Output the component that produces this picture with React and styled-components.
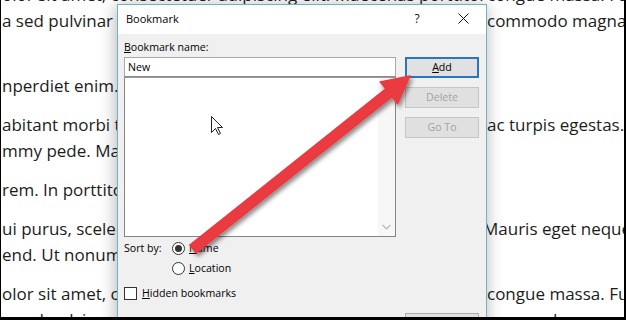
import React from 'react'
import styled, { createGlobalStyle } from 'styled-components'

const GlobalStyle = createGlobalStyle`
  html, body {
    margin: 0;
    padding: 0;
    background: #fff;
  }
  body {
    width: 626px;
    height: 320px;
    overflow: hidden;
  }
`

// what shows of the Word page around the dialog: [left of dialog, right of dialog, right text slips under the border]
const paragraphs = [
  [
    ['olor sit amet, consectetuer adipiscing elit. Maecenas porttitor', 'congue massa. Fusce'],
    ['a sed pulvinar ultricies, purus lectus malesuada libero, sit amet', 'commodo magna eros'],
    ['', '']
  ],
  [['nperdiet enim. Fusce est. Vivamus a tellus.', '']],
  [
    ['abitant morbi tristique senectus et netus et malesuada fames', 'ac turpis egestas. Proin'],
    ['mmy pede. Mauris et orci.', '']
  ],
  [['rem. In porttitor. Donec laoreet nonummy augue.', '']],
  [
    ['ui purus, scelerisque at, vulputate vitae, pretium mattis, nunc.', 'Mauris eget neque', true],
    ['end. Ut nonummy.', '']
  ],
  [
    ['olor sit amet, consectetuer adipiscing elit. Maecenas porttitor', 'congue massa. Fusce'],
    ['a sed pulvinar ultricies, purus lectus malesuada libero, sit amet', 'commodo magna eros']
  ]
]

function Radio({ checked, children }) {
  return (
    <RadioRow>
      <RadioCircle>{checked && <RadioDot />}</RadioCircle>
      <span>{children}</span>
    </RadioRow>
  )
}

function Overlay() {
  return (
    <OverlaySvg width="626" height="320" viewBox="0 0 626 320">
      <defs>
        <filter id="arrowShadow" x="-20%" y="-20%" width="140%" height="140%">
          <feDropShadow dx="2" dy="3" stdDeviation="2" floodColor="#000" floodOpacity="0.45" />
        </filter>
      </defs>
      {/* cursor */}
      <path
        d="M211.5 116.5 L211.5 132.5 L215.5 128.5 L218.5 134.5 L220.5 133.5 L217.5 127.5 L222.5 127.5 Z"
        fill="#fff"
        stroke="#222"
        strokeWidth="1"
        strokeLinejoin="round"
      />
      {/* red arrow */}
      <polygon
        points="189.9,245.1 385.8,88.9 380.2,81.9 410,76 397.6,103.8 392,96.7 196.1,252.9"
        fill="#ea3a40"
        stroke="#ea3a40"
        strokeWidth="1.5"
        strokeLinejoin="round"
        filter="url(#arrowShadow)"
      />
    </OverlaySvg>
  )
}

export default function App() {
  return (
    <>
      <GlobalStyle />
      <Frame>
        <Page>
          {paragraphs.map((lines, i) => (
            <Paragraph key={i}>
              {lines.map(([left, right, cut], j) => (
                <Line key={j}>
                  <LeftText>{left || '\u00a0'}</LeftText>
                  <RightText $cut={cut}>{right}</RightText>
                </Line>
              ))}
            </Paragraph>
          ))}
        </Page>

        <Dialog>
          <TitleBar>
            <Title>Bookmark</Title>
            <CaptionButton>?</CaptionButton>
            <CaptionButton>
              <svg width="11" height="11" viewBox="0 0 11 11">
                <path d="M0.5 0.5 L10.5 10.5 M10.5 0.5 L0.5 10.5" stroke="#111" strokeWidth="1" />
              </svg>
            </CaptionButton>
          </TitleBar>

          <Body>
            <FieldLabel>
              <u>B</u>ookmark name:
            </FieldLabel>
            <span />

            <Fields>
              <NameInput>New</NameInput>
              <ListBox>
                <ListItems />
                <ScrollTrack>
                  <svg width="9" height="6" viewBox="0 0 9 6">
                    <path d="M0.5 0.8 L4.5 4.8 L8.5 0.8" fill="none" stroke="#b4b4b4" strokeWidth="1.2" />
                  </svg>
                </ScrollTrack>
              </ListBox>
            </Fields>

            <ButtonStack>
              <DialogButton $default>
                <u>A</u>dd
              </DialogButton>
              <DialogButton disabled>Delete</DialogButton>
              <DialogButton disabled>Go To</DialogButton>
            </ButtonStack>

            <SortRow>
              <SortLabel>Sort by:</SortLabel>
              <RadioGroup>
                <Radio checked>
                  <u>N</u>ame
                </Radio>
                <Radio>
                  <u>L</u>ocation
                </Radio>
              </RadioGroup>
            </SortRow>
            <span />

            <CheckRow>
              <CheckBox />
              <span>
                <u>H</u>idden bookmarks
              </span>
            </CheckRow>
            <span />

            <span />
            <FooterButton>Cancel</FooterButton>
          </Body>
        </Dialog>

        <Overlay />
      </Frame>
    </>
  )
}

const Frame = styled.div`
  position: relative;
  width: 626px;
  height: 320px;
  box-sizing: border-box;
  border-left: 1px solid #000;
  border-right: 2px solid #000;
  border-bottom: 3px solid #000;
  overflow: hidden;
  background: #fff;
`

const Page = styled.div`
  margin-top: -18px;
  font-family: 'Open Sans', sans-serif;
  font-size: 17px;
  line-height: 26px;
  color: #1c1c1c;
`

const Paragraph = styled.div`
  margin-bottom: 13px;
`

const Line = styled.div`
  display: grid;
  grid-template-columns: 486px 1fr;
  height: 26px;
  white-space: nowrap;
`

const LeftText = styled.span`
  overflow: hidden;
  padding-left: 1px;
`

const RightText = styled.span`
  margin-left: ${props => (props.$cut ? '-4px' : '0px')};
`

const Dialog = styled.div`
  position: absolute;
  left: 116px;
  top: 4px;
  width: 370px;
  height: 330px;
  box-sizing: border-box;
  border: 1px solid #6db3c7;
  background: #f0f0f0;
  box-shadow: -1px 2px 16px rgba(0, 0, 0, 0.3);
  font-family: 'Open Sans', sans-serif;
  font-size: 10.6px;
  color: #000;
  display: flex;
  flex-direction: column;
`

const TitleBar = styled.div`
  height: 29px;
  flex-shrink: 0;
  background: #fff;
  display: flex;
`

const Title = styled.div`
  flex: 1;
  padding-left: 8px;
  font-size: 11px;
  line-height: 27px;
`

const CaptionButton = styled.div`
  width: 46px;
  height: 29px;
  box-sizing: border-box;
  padding-bottom: 2px;
  display: flex;
  align-items: center;
  justify-content: center;
  font-size: 12px;
  color: #111;
`

const Body = styled.div`
  display: grid;
  grid-template-columns: 272px 74px;
  column-gap: 9px;
  align-items: start;
  padding: 6px 0 0 6px;
`

const FieldLabel = styled.div`
  line-height: 15px;
  margin-bottom: 2px;
`

const Fields = styled.div`
  display: flex;
  flex-direction: column;
`

const NameInput = styled.div`
  height: 20px;
  box-sizing: border-box;
  border: 1px solid #a9a9a9;
  border-bottom-color: #8a8a8a;
  background: #fff;
  padding-left: 3px;
  line-height: 18px;
`

const ListBox = styled.div`
  height: 160px;
  box-sizing: border-box;
  border: 1px solid #858585;
  border-top-color: #9a9a9a;
  background: #fff;
  display: flex;
`

const ListItems = styled.div`
  flex: 1;
`

const ScrollTrack = styled.div`
  width: 17px;
  background: #f7f7f7;
  display: flex;
  flex-direction: column;
  justify-content: flex-end;
  align-items: center;
  padding-bottom: 6px;
`

const ButtonStack = styled.div`
  display: flex;
  flex-direction: column;
  gap: 9px;
`

const DialogButton = styled.div`
  height: 21px;
  box-sizing: border-box;
  border: ${props => (props.$default ? '2px solid #2b74c4' : '1px solid #c5c5c5')};
  background: ${props => (props.disabled ? '#e0e0e0' : '#e1e1e1')};
  color: ${props => (props.disabled ? '#a3a3a3' : '#000')};
  display: flex;
  align-items: center;
  justify-content: center;
  line-height: 15px;
`

const SortRow = styled.div`
  display: flex;
  margin-top: 1px;
`

const SortLabel = styled.div`
  width: 48px;
  line-height: 18px;
  padding-top: 1px;
`

const RadioGroup = styled.div`
  display: flex;
  flex-direction: column;
`

const RadioRow = styled.div`
  height: 20px;
  display: flex;
  align-items: center;
  gap: 4px;
  line-height: 15px;
`

const RadioCircle = styled.span`
  width: 13px;
  height: 13px;
  box-sizing: border-box;
  border: 1px solid #333;
  border-radius: 50%;
  background: #fff;
  display: flex;
  align-items: center;
  justify-content: center;
`

const RadioDot = styled.span`
  width: 7px;
  height: 7px;
  border-radius: 50%;
  background: #333;
`

const CheckRow = styled.div`
  display: flex;
  align-items: center;
  gap: 5px;
  height: 18px;
  margin-top: 6px;
  line-height: 15px;
`

const CheckBox = styled.span`
  width: 13px;
  height: 13px;
  box-sizing: border-box;
  border: 1px solid #333;
  background: #fff;
`

const FooterButton = styled.div`
  margin-top: 11px;
  height: 21px;
  box-sizing: border-box;
  border: 1px solid #adadad;
  background: #e1e1e1;
  display: flex;
  align-items: center;
  justify-content: center;
`

const OverlaySvg = styled.svg`
  position: absolute;
  left: -1px;
  top: 0;
  pointer-events: none;
`
